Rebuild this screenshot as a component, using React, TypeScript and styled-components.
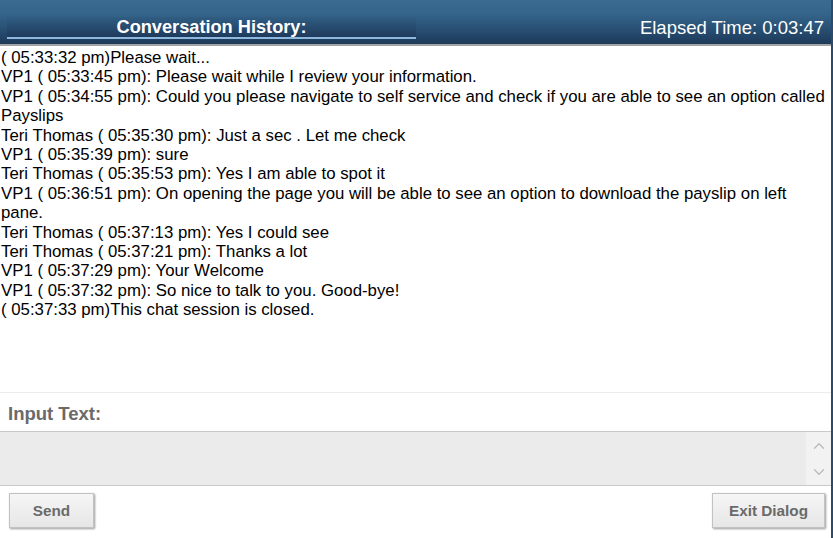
import styled, { createGlobalStyle } from "styled-components";
import { ChevronUp, ChevronDown } from "lucide-react";

const Global = createGlobalStyle`
html, body { margin: 0; padding: 0; background: #fff; }
body { font-family: "Liberation Sans", Arial, sans-serif; }
`;

const Frame = styled.div`
  width: 831px;
  height: 538px;
  border-right: 2px solid #2d4a68;
  display: flex;
  flex-direction: column;
  overflow: hidden;
  background: #fff;
`;

const Header = styled.div`
  height: 46px;
  flex-shrink: 0;
  background: linear-gradient(#3c6b91 0%, #36658b 30%, #2a5377 60%, #1d3a5a 100%);
  border-bottom: 2px solid #a3a3a3;
  display: flex;
  align-items: flex-start;
  justify-content: space-between;
  padding: 17px 7px 0 7px;
  box-sizing: border-box;
  color: #fff;
`;

const TitleBox = styled.div`
  width: 409px;
  height: 22px;
  box-sizing: border-box;
  background: linear-gradient(#305d83, #1f3b5c);
  border-bottom: 2px solid #8fb8df;
  display: flex;
  align-items: center;
  justify-content: center;
  font-weight: bold;
  font-size: 18.2px;
  padding-top: 1px;
`;

const Elapsed = styled.div`
  font-size: 18.5px;
  line-height: 22px;
`;

const History = styled.div`
  height: 347px;
  flex-shrink: 0;
  padding: 2px 0 0 1px;
  box-sizing: border-box;
  border-bottom: 1px solid #ececec;
  font-size: 16.8px;
  line-height: 19.4px;
  color: #000;
`;

const Line = styled.div``;

const InputLabel = styled.div`
  padding: 10px 0 0 8px;
  height: 38px;
  box-sizing: border-box;
  font-size: 18.5px;
  font-weight: bold;
  color: #6a6a6a;
`;

const InputBox = styled.div`
  height: 55px;
  flex-shrink: 0;
  background: #ebebeb;
  border-top: 1px solid #c9c9c9;
  border-bottom: 1px solid #c9c9c9;
  box-sizing: border-box;
  display: flex;
  justify-content: flex-end;
`;

const Scroll = styled.div`
  width: 25px;
  background: #f2f2f2;
  display: flex;
  flex-direction: column;
  align-items: center;
  justify-content: space-between;
  padding: 5px 0 4px;
  color: #b9b9b9;
`;

const ButtonRow = styled.div`
  display: flex;
  justify-content: space-between;
  padding: 7px 6px 0 9px;
`;

const Button = styled.button<{ $w: number }>`
  width: ${(p) => p.$w}px;
  height: 35px;
  background: linear-gradient(#f6f6f6, #e6e6e6);
  border: 1px solid #c2c2c2;
  box-shadow: 1px 1px 2px #9a9a9a;
  font-family: "Liberation Sans", Arial, sans-serif;
  font-weight: bold;
  font-size: 15.3px;
  color: #6a6a6a;
  padding: 0;
`;

const lines = [
  "( 05:33:32 pm)Please wait...",
  "VP1 ( 05:33:45 pm): Please wait while I review your information.",
  "VP1 ( 05:34:55 pm): Could you please navigate to self service and check if you are able to see an option called Payslips",
  "Teri Thomas ( 05:35:30 pm): Just a sec . Let me check",
  "VP1 ( 05:35:39 pm): sure",
  "Teri Thomas ( 05:35:53 pm): Yes I am able to spot it",
  "VP1 ( 05:36:51 pm): On opening the page you will be able to see an option to download the payslip on left pane.",
  "Teri Thomas ( 05:37:13 pm): Yes I could see",
  "Teri Thomas ( 05:37:21 pm): Thanks a lot",
  "VP1 ( 05:37:29 pm): Your Welcome",
  "VP1 ( 05:37:32 pm): So nice to talk to you. Good-bye!",
  "( 05:37:33 pm)This chat session is closed.",
];

export default function App() {
  return (
    <Frame>
      <Global />
      <Header>
        <TitleBox>Conversation History:</TitleBox>
        <Elapsed>Elapsed Time: 0:03:47</Elapsed>
      </Header>
      <History>
        {lines.map((l, i) => (
          <Line key={i}>{l}</Line>
        ))}
      </History>
      <InputLabel>Input Text:</InputLabel>
      <InputBox>
        <Scroll>
          <ChevronUp size={18} strokeWidth={1.6} />
          <ChevronDown size={18} strokeWidth={1.6} />
        </Scroll>
      </InputBox>
      <ButtonRow>
        <Button $w={85}>Send</Button>
        <Button $w={113}>Exit Dialog</Button>
      </ButtonRow>
    </Frame>
  );
}
